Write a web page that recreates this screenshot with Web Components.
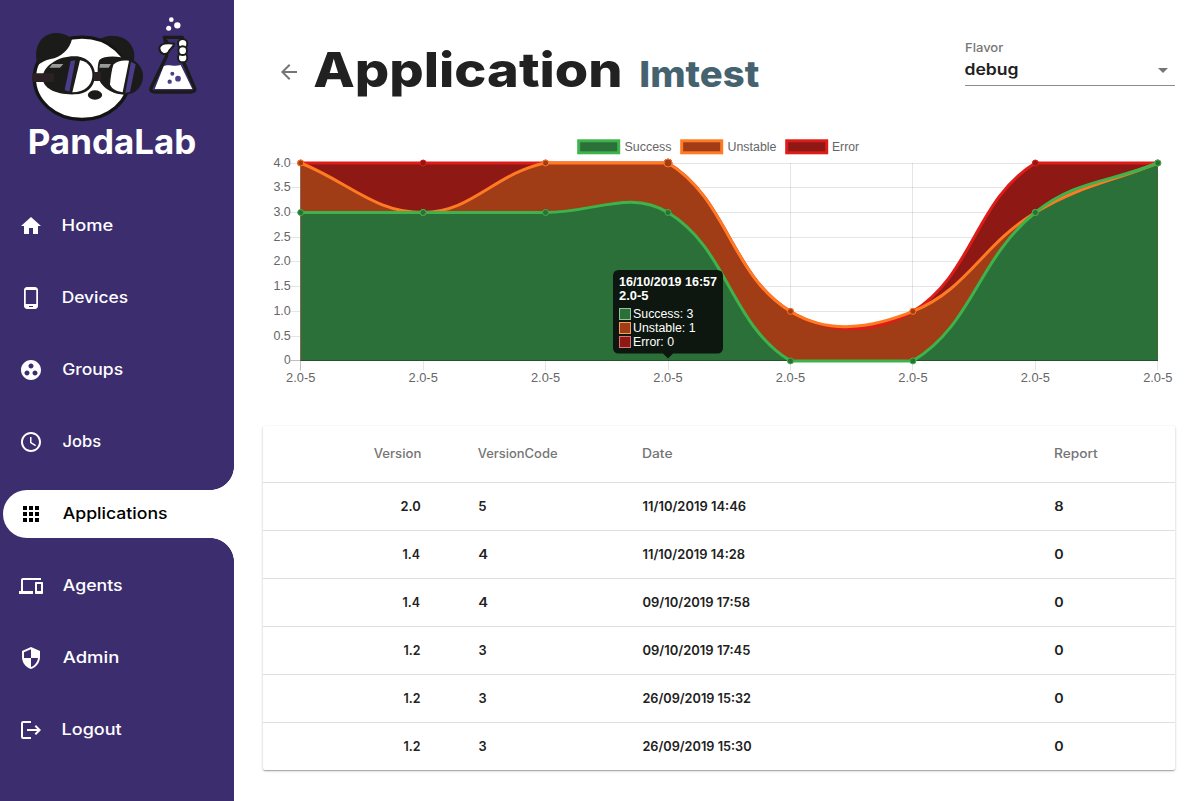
<!DOCTYPE html>
<html lang="en">
<head>
<meta charset="utf-8">
<title>PandaLab</title>
<style>
html,body{margin:0;height:100%;background:#fff}
body{font-family:Inter,"Open Sans",sans-serif;overflow:hidden}
</style>
</head>
<body>
<panda-app></panda-app>
<script>
const FONT = 'Inter,"Open Sans",sans-serif';
const ctx = document.createElement('canvas').getContext('2d');
function define(name, html, setup) {
  const t = document.createElement('template');
  t.innerHTML = html;
  customElements.define(name, class extends HTMLElement {
    connectedCallback() {
      if (this.shadowRoot) return;
      this.attachShadow({mode: 'open'}).append(t.content.cloneNode(true));
      if (setup) setup(this, this.shadowRoot);
    }
  });
}

/* Text whose box is its cap-height by its ink width. */
customElements.define('fit-text', class extends HTMLElement {
  connectedCallback() {
    if (this.shadowRoot) return;
    const text = this.getAttribute('text'), size = +this.getAttribute('size'),
      weight = this.getAttribute('weight') || 500, w = +this.getAttribute('w');
    /* Measured large, because bounding boxes are rounded to whole pixels. */
    ctx.font = `${weight} ${size * 20}px ${FONT}`;
    const m = ctx.measureText(text), left = m.actualBoundingBoxLeft / 20;
    const k = w / (left + m.actualBoundingBoxRight / 20);
    this.attachShadow({mode: 'open'}).innerHTML = `<style>
      :host{display:block;flex:none;width:${w}px;height:${size * .727}px}
      div{display:flex}
      span{display:block;width:max-content;white-space:pre;font:${weight} ${size}px/1 ${FONT};
        margin-top:${-size * .137}px;
        transform:translateX(${left * k}px) scaleX(${k});transform-origin:0 0}
      </style><div><span>${text}</span></div>`;
  }
});

define('panda-logo', `<style>:host{display:block;width:190px;height:155px}svg{display:block}</style>
<svg width="190" height="155" viewBox="0 0 570 465">
  <ellipse cx="186" cy="205" rx="143" ry="123.500" fill="#fff" stroke="#141412" stroke-width="10"/>
  <g fill="#1b1b19">
    <path d="M53 166C38 112 62 71 108 69C132 69 148 80 156 87C150 118 122 143 92 147C76 150 64 157 53 166Z"/>
    <path d="M243 85C270 71 312 76 331 102C345 121 345 142 340 160L312 148C300 122 276 102 243 85Z"/>
    <path d="M95 160C118 142 148 137 172 139C208 144 228 172 225 200C222 232 200 252 165 253C108 255 70 236 68 205C68 185 80 170 95 160Z"/>
    <path d="M238 150C255 136 292 138 330 147C356 154 371 180 369 202C367 232 343 257 310 254C272 252 234 226 233 190C233 175 233 160 238 150Z"/>
    <ellipse cx="225" cy="255" rx="21.500" ry="14"/>
  </g>
  <path d="M180 151C206 155 219 177 217 200C214 227 194 246 157 247Z" fill="#fff"/>
  <path d="M152 153L166 151L148 245L134 240Z" fill="#4c3c8c"/>
  <path d="M280 164C292 151 310 150 327 152L308 247C288 244 274 236 270 223C272 200 275 180 280 164Z" fill="#fff"/>
  <path d="M333 155L347 163L330 246L316 248Z" fill="#4c3c8c"/>
  <path d="M97 162H130L120 173H88ZM240 162H273L266 173H238Z" fill="#999"/>
  <path d="M37 190H102V216H37ZM222 186H243V213H222Z" fill="#2b2023"/>
  <path d="M436 94L433 82H487L483 94V138L523 232Q529 246 512 246H406Q388 246 394 232L440 138V94Z" fill="#3c2d6f" stroke="#1b1b19" stroke-width="10" stroke-linejoin="round"/>
  <path d="M431 169C444 160 460 172 482 165L517 237H404Z" fill="#fff"/>
  <g fill="#4c3c8c"><circle cx="457" cy="191" r="6"/><circle cx="474" cy="206" r="8.500"/><circle cx="449" cy="215" r="6.500"/></g>
  <g fill="#fff" stroke="#1b1b19" stroke-width="6">
    <circle cx="488" cy="101" r="14"/><circle cx="488" cy="143" r="14"/><circle cx="488" cy="122" r="13"/>
    <path d="M418 115C420 99 445 98 462 101C463 110 450 116 445 127C435 137 420 132 418 115Z"/>
  </g>
  <g fill="#fff"><circle cx="454" cy="29" r="7"/><circle cx="472" cy="46" r="9.500"/><circle cx="446" cy="55" r="7.500"/></g>
  <text x="23" y="431" font-family='Inter,sans-serif' font-weight="700" font-size="101" textLength="506" lengthAdjust="spacingAndGlyphs" fill="#fff">PandaLab</text>
</svg>`);

const ICONS = {
  home: 'M10 20v-6h4v6h5v-8h3L12 3 2 12h3v8z',
  phone: 'M16 1H8C6.340 1 5 2.340 5 4v16c0 1.660 1.340 3 3 3h8c1.660 0 3-1.340 3-3V4c0-1.660-1.340-3-3-3zm-2 20h-4v-1h4v1zm3.250-3H6.750V4h10.500v14z',
  groups: 'M12 2C6.480 2 2 6.480 2 12s4.480 10 10 10 10-4.480 10-10S17.520 2 12 2zM8 17.500c-1.380 0-2.500-1.120-2.500-2.500s1.120-2.500 2.500-2.500 2.500 1.120 2.500 2.500-1.120 2.500-2.500 2.500zM9.500 8c0-1.380 1.120-2.500 2.500-2.500s2.500 1.120 2.500 2.500-1.120 2.500-2.500 2.500S9.500 9.380 9.500 8zm6.500 9.500c-1.380 0-2.500-1.120-2.500-2.500s1.120-2.500 2.500-2.500 2.500 1.120 2.500 2.500-1.120 2.500-2.500 2.500z',
  clock: 'M11.990 2C6.470 2 2 6.480 2 12s4.470 10 9.990 10C17.520 22 22 17.520 22 12S17.520 2 11.990 2zM12 20c-4.420 0-8-3.580-8-8s3.580-8 8-8 8 3.580 8 8-3.580 8-8 8zm.5-13H11v6l5.250 3.150.750-1.230-4.500-2.670z',
  apps: 'M4 8h4V4H4v4zm6 12h4v-4h-4v4zm-6 0h4v-4H4v4zm0-6h4v-4H4v4zm6 0h4v-4h-4v4zm6-10v4h4V4h-4zm-6 4h4V4h-4v4zm6 6h4v-4h-4v4zm0 6h4v-4h-4v4z',
  agents: 'M4 6h18V4H4c-1.100 0-2 .9-2 2v11H0v3h14v-3H4V6zm19 2h-6c-.55 0-1 .45-1 1v10c0 .55.45 1 1 1h6c.55 0 1-.45 1-1V9c0-.55-.45-1-1-1zm-1 9h-4v-7h4v7z',
  shield: 'M12 1L3 5v6c0 5.550 3.840 10.740 9 12 5.160-1.260 9-6.450 9-12V5l-9-4zm0 10.990h7c-.53 4.120-3.280 7.790-7 8.940V12H5V6.300l7-3.110v8.800z',
  logout: 'M4 3H12V5H4V19H12V21H4Q2 21 2 19V5Q2 3 4 3ZM8 11H18.200L15.600 8.400 17 7 22 12 17 17 15.600 15.600 18.200 13H8Z'
};
define('nav-item', `<style>
:host{display:block;height:48px;color:#fff;position:relative}
.row{display:flex;align-items:center;height:48px;padding-left:16.300px;margin-left:3px;border-radius:24px 0 0 24px}
svg{width:24px;height:24px;fill:currentColor;margin-right:20.200px;flex:none}
fit-text{margin-top:.2px}
:host([active]){color:#000}
:host([active]) .row{background:#fff}
:host([active])::before,:host([active])::after{content:"";position:absolute;right:0;width:24px;height:24px}
:host([active])::before{top:-24px;background:radial-gradient(circle at 0 0,transparent 23.600px,#fff 24.200px)}
:host([active])::after{bottom:-24px;background:radial-gradient(circle at 0 100%,transparent 23.600px,#fff 24.200px)}
</style><div class="row"><svg viewBox="0 0 24 24"><path/></svg></div>`, (el, r) => {
  r.querySelector('path').setAttribute('d', ICONS[el.getAttribute('icon')]);
  r.querySelector('.row').insertAdjacentHTML('beforeend', `<fit-text text="${el.getAttribute('label')}" size="15.700" w="${el.getAttribute('w')}"></fit-text>`);
});

define('side-bar', `<style>
:host{display:flex;flex-direction:column;width:234px;height:801px;background:#3c2d6f;flex:none}
panda-logo{margin:10px 0 0 20px}
nav{display:flex;flex-direction:column;gap:24px;margin-top:37px}
</style><panda-logo></panda-logo><nav>
<nav-item icon="home" label="Home" w="49.500"></nav-item>
<nav-item icon="phone" label="Devices" w="64.500"></nav-item>
<nav-item icon="groups" label="Groups" w="59.500"></nav-item>
<nav-item icon="clock" label="Jobs" w="37.500"></nav-item>
<nav-item icon="apps" label="Applications" w="104" active></nav-item>
<nav-item icon="agents" label="Agents" w="59"></nav-item>
<nav-item icon="shield" label="Admin" w="55"></nav-item>
<nav-item icon="logout" label="Logout" w="58.500"></nav-item></nav>`);

define('page-head', `<style>
:host{display:flex;height:130px;align-items:flex-start;color:#212121}
svg{display:block;flex:none}
.back{margin:60px 13px 0 43px}
.title{display:flex;align-items:flex-end;gap:20px;margin-top:52.300px}
.sub{color:#456270}
.sel{width:210px;margin:43.700px 25px 0 auto}
.lab{color:#777;margin-left:.7px}
.val{display:flex;justify-content:space-between;height:31.500px;border-bottom:1px solid #8c8c8c;padding-top:9.300px;box-sizing:border-box;margin-top:1.600px}
.caret{margin:4.300px 7px 0 0}
</style>
<svg class="back" width="24" height="24" viewBox="0 0 24 24" fill="#757575"><path d="M20 11H7.830l5.590-5.590L12 4l-8 8 8 8 1.410-1.410L7.830 13H20v-2z"/></svg>
<div class="title"><fit-text text="Application" size="48.200" weight="800" w="306.500"></fit-text>
<fit-text class="sub" text="Imtest" size="36" weight="800" w="118"></fit-text></div>
<div class="sel"><fit-text class="lab" text="Flavor" size="12.300" w="37"></fit-text>
<div class="val"><fit-text text="debug" size="16" weight="600" w="52.500"></fit-text>
<svg class="caret" width="10" height="5" viewBox="0 0 10 5"><path d="M0 0H10L5 5Z" fill="#757575"/></svg></div></div>`);

/* Stacked area chart; cardinal splines with tension 0.4, capped to the plot area. */
define('build-chart', `<style>:host{display:block;width:966px;height:270px}svg{display:block}</style><div></div>`, (el, r) => {
  const L = 300.7, R = 1157.8, T = 163, B = 360.9, X = i => L + i * (R - L) / 7, Y = v => B - v * (B - T) / 4;
  const clamp = v => Math.max(T, Math.min(B, v));
  const sets = [
    {v: [4,4,4,4,1,1,4,4], f: '#8e1914', s: '#dd1c1a', n: 'Error', w: 27, lx: 785, tx: 832},
    {v: [4,3,4,4,1,1,3,4], f: '#a03c16', s: '#ff7a22', n: 'Unstable', w: 49, lx: 680, tx: 727.5},
    {v: [3,3,3,3,0,0,3,4], f: '#2b6f39', s: '#3db34c', n: 'Success', w: 47, lx: 577, tx: 624.5}];
  const curve = v => {
    const p = v.map((a, i) => [X(i), Y(a)]);
    const c = p.map((q, i) => {
      const a = p[i - 1] || q, b = p[i + 1] || q;
      const d0 = Math.hypot(q[0] - a[0], q[1] - a[1]), d1 = Math.hypot(b[0] - q[0], b[1] - q[1]);
      const fa = .4 * d0 / (d0 + d1), fb = .4 * d1 / (d0 + d1);
      return [q[0] - fa * (b[0] - a[0]), clamp(q[1] - fa * (b[1] - a[1])), q[0] + fb * (b[0] - a[0]), clamp(q[1] + fb * (b[1] - a[1]))];
    });
    return 'M' + p[0] + p.slice(1).map((q, i) => `C${c[i][2]} ${c[i][3]} ${c[i + 1][0]} ${c[i + 1][1]} ${q}`).join('');
  };
  let s = '';
  const line = (x1, y1, x2, y2, o) => `<path d="M${x1} ${y1}L${x2} ${y2}" stroke="#000" stroke-opacity="${o}"/>`;
  const txt = (x, y, t, a = 'start', len = 0) => `<text x="${x}" y="${y}" text-anchor="${a}"${len ? ` textLength="${len}" lengthAdjust="spacingAndGlyphs"` : ''}>${t}</text>`;
  for (let k = 0; k <= 8; k++) {
    const y = Math.floor(Y(k / 2)) + .5, v = k / 2;
    s += line(290.5, y, R, y, k ? .1 : .25);
    s += txt(290.8, y + 3.9, k ? v.toFixed(1) : '0', 'end', k ? 17.4 : 0);
  }
  for (let i = 0; i < 8; i++) {
    const x = Math.floor(X(i)) + .5;
    s += line(x, 163, x, 370.5, i ? .1 : .25) + txt(X(i), 381.7, '2.0-5', 'middle', 29.3);
  }
  for (const d of sets) s += `<path d="${curve(d.v)}V${B}H${L}Z" fill="${d.f}"/>`;
  s += line(L, 360.5, R, 360.5, .25) + `<path d="M300.500 163V${B}" stroke="#8a6455" stroke-width=".8"/>`;
  for (const d of sets) {
    s += `<path d="${curve(d.v)}" fill="none" stroke="${d.s}" stroke-width="3"/>`;
    d.v.forEach((v, i) => { s += `<circle cx="${X(i)}" cy="${Y(v)}" r="${i == 3 && v == 4 ? 4 : 3}" fill="${d.f}" stroke="${d.s}" stroke-width="1"/>`; });
    s += `<rect x="${d.lx + 1.7}" y="140.800" width="40" height="12" fill="${d.f}" stroke="${d.s}" stroke-width="3"/>`;
    s += txt(d.tx, 151, d.n, 'start', d.w);
  }
  s += `<path d="M619 270H717Q723 270 723 276V347.500Q723 353.500 717 353.500H673L668 358.500L663 353.500H619Q613 353.500 613 347.500V276Q613 270 619 270Z" fill="#0d170f"/>`;
  s += `<g fill="#fff"><g font-weight="700">${txt(619, 286, '16/10/2019 16:57', 'start', 98)}${txt(619, 300, '2.0-5', 'start', 29.5)}</g>`;
  [['Success: 3', 60.5, '#2b6f39', '#95c69b'], ['Unstable: 1', 62.5, '#a03c16', '#f0a060'], ['Error: 0', 41, '#8e1914', '#dc7775']].forEach((b, i) => {
    const y = 308 + i * 14;
    s += `<rect x="619.500" y="${y + .5}" width="11" height="11" fill="${b[2]}" stroke="${b[3]}"/>` + txt(633, y + 10, b[0], 'start', b[1]);
  });
  s += '</g>';
  r.querySelector('div').innerHTML = `<svg width="966" height="270" viewBox="234 130 966 270" font-family="'Liberation Sans',Arial,sans-serif" font-size="12" fill="#666">${s}</svg>`;
});

define('table-row', `<style>
:host{display:grid;grid-template-columns:158px 221px 412px 1fr;height:47px;border-bottom:1px solid #e0e0e0;align-items:center;color:#212121}
:host([head]){height:56px;color:#757575}
:host([last]){border:0}
fit-text{margin-top:1px}
:host([head]) fit-text{margin-top:0}
fit-text:first-of-type{justify-self:end}
</style>`, (el, r) => {
  const t = el.getAttribute('cells').split('|'), w = el.getAttribute('widths').split(','), head = el.hasAttribute('head');
  const ml = head ? [0, 57, .6, .6] : [0, 58, .5, 1];
  r.querySelector('style').insertAdjacentHTML('afterend', t.map((c, i) =>
    `<fit-text text="${c}" w="${w[i]}" size="${head ? 12.4 : 12.9}" weight="${head ? 500 : 600}" style="margin-left:${ml[i]}px;${i == 0 ? `margin-right:${head ? .5 : 1.2}px` : ''}"></fit-text>`).join(''));
});

define('versions-table', `<style>
:host{display:block;margin:26px 25px 0 29px;height:344px;background:#fff;border-radius:2px;box-shadow:0 1px 3px rgba(0,0,0,.2),0 1px 1px rgba(0,0,0,.14),0 2px 1px -1px rgba(0,0,0,.12)}
</style>
<table-row head cells="Version|VersionCode|Date|Report" widths="46.500,79,29,42.500"></table-row>
<table-row cells="2.0|5|11/10/2019 14:46|8" widths="19,7,102.500,8"></table-row>
<table-row cells="1.4|4|11/10/2019 14:28|0" widths="16.500,8.500,101.500,8"></table-row>
<table-row cells="1.4|4|09/10/2019 17:58|0" widths="16.500,8.500,106.500,8"></table-row>
<table-row cells="1.2|3|09/10/2019 17:45|0" widths="16,7,107,8"></table-row>
<table-row cells="1.2|3|26/09/2019 15:32|0" widths="16,7,107.500,8"></table-row>
<table-row last cells="1.2|3|26/09/2019 15:30|0" widths="16,7,108,8"></table-row>`);

define('panda-app', `<style>:host{display:flex;width:1200px;height:801px;overflow:hidden;background:#fff}main{flex:1;min-width:0}</style>
<side-bar></side-bar><main><page-head></page-head><build-chart></build-chart><versions-table></versions-table></main>`);
</script>
</body>
</html>
